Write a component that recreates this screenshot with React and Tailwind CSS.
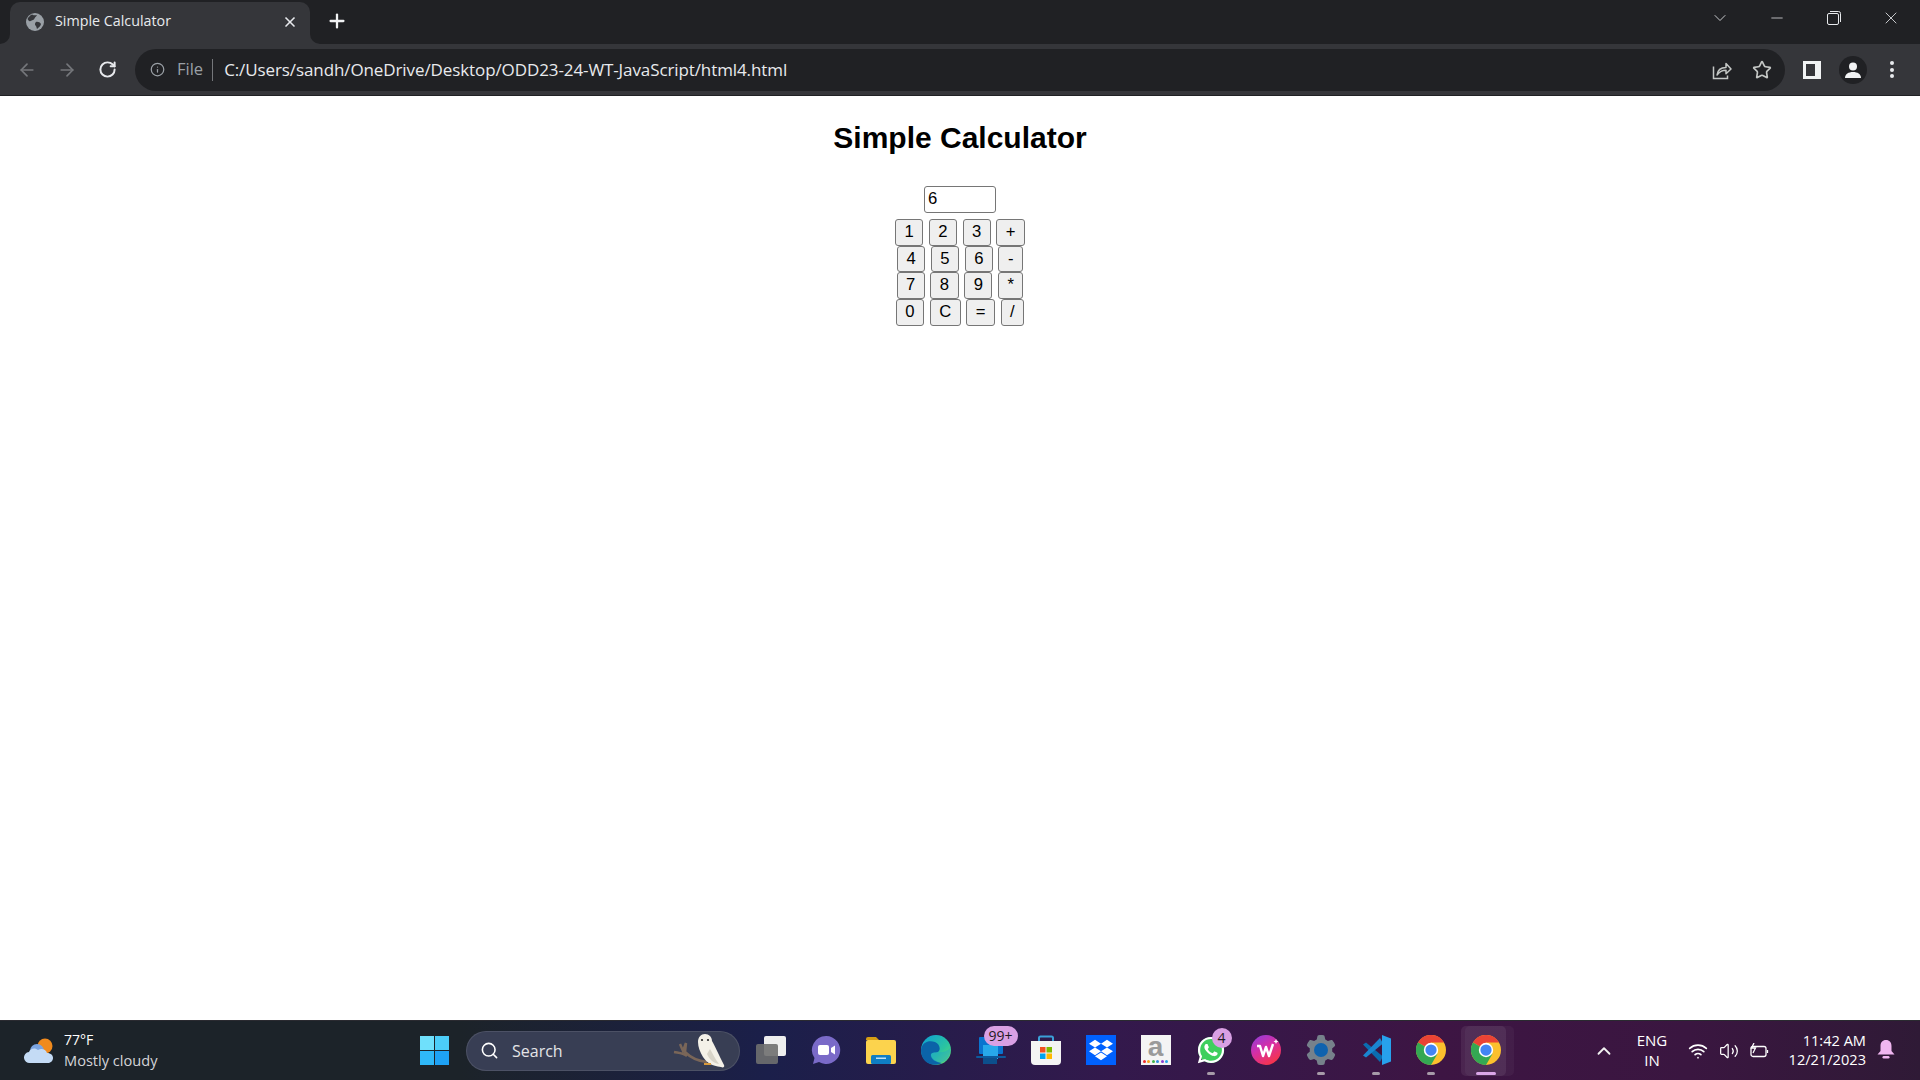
import { ArrowLeft, ArrowRight, RotateCw, Info, Star, Search, ChevronUp, ChevronDown, X, Plus, Minus, Wifi, Volume2 } from "lucide-react";
import { FaWhatsapp, FaDropbox } from "react-icons/fa";
import { FaGear } from "react-icons/fa6";

const uiFont = "font-['Open_Sans',sans-serif]";

const calcRows = [
  ["1", "2", "3", "+"],
  ["4", "5", "6", "-"],
  ["7", "8", "9", "*"],
  ["0", "C", "=", "/"],
];

function Favicon() {
  return (
    <svg width="18" height="18" viewBox="0 0 18 18">
      <circle cx="9" cy="9" r="9" fill="#9aa0a6" />
      <path d="M6 1.500c2 1 3.500 1 5 .5-.5 1.500-2 2-2.500 3.500S6 7 4.500 8 2.500 7 1.500 6C2.500 4 4 2.500 6 1.500zM10 9c2-.5 4 .5 5 2-.5 2-2 3.500-4 5-.5-1.500-.5-2.500-1.500-3.500S9 10 10 9z" fill="#35363a" />
    </svg>
  );
}

function ShareIcon() {
  return (
    <svg width="20" height="20" viewBox="0 0 20 20" fill="none" stroke="#c4c7c5" strokeWidth="1.500">
      <path d="M1.500 6.500v12h14v-3" />
      <path d="M5 15c.5-4 3-7.500 9-7.500V3.500l5 5.500-5 4.800v-3.600c-3.500 0-6.500 1.300-9 4.800z" strokeLinejoin="round" />
    </svg>
  );
}

function SidePanelIcon() {
  return (
    <div className="flex h-[18px] w-[18px] justify-start bg-[#f1f3f4] py-[3px] pl-[3px]">
      <div className="h-full w-[9px] bg-[#35363a]" />
    </div>
  );
}

function ProfileIcon() {
  return (
    <div className="flex h-7 w-7 items-center justify-center rounded-full bg-[#202124]">
      <svg width="18" height="18" viewBox="0 0 18 18" fill="#f1f3f4">
        <circle cx="9" cy="5.500" r="4" />
        <path d="M1 17c0-4 3.500-6 8-6s8 2 8 6z" />
      </svg>
    </div>
  );
}

function WeatherIcon() {
  return (
    <svg width="32" height="28" viewBox="0 0 32 28">
      <circle cx="21" cy="9" r="7.500" fill="#f08a1d" />
      <ellipse cx="13" cy="14" rx="7" ry="7" fill="#7ba4e0" />
      <path d="M6 26a5.500 5.500 0 0 1-1-11c1-3.500 6-5 9-2 3-2 8-1 9 3 4 0 6 2.500 6 5s-2 5-5 5z" fill="#c4dbf5" />
    </svg>
  );
}

function WindowsLogo() {
  return (
    <div className="grid h-[29px] w-[29px] grid-cols-2 gap-[1px]">
      <div className="bg-[#6fe0fb]" />
      <div className="bg-[#4ccdf8]" />
      <div className="bg-[#2fb8f8]" />
      <div className="bg-[#1ea2f5]" />
    </div>
  );
}

function Owl() {
  return (
    <svg width="58" height="36" viewBox="0 0 58 36">
      <path d="M1 19c5 1 9 1 13 4M7 11l3 7 3-8-1 9c5 5 11 9 22 10" fill="none" stroke="#7a6658" strokeWidth="2.500" />
      <path d="M25 9c0-5 3-8 7-8s7 3 7 7c3 5 6 12 12 24 1 2-1 3-3 2-9-1-14-4-18-10-3-5-5-10-5-15z" fill="#f4f1e8" />
      <path d="M37 16c3 5 5 10 9 15-6-1-10-5-12-10z" fill="#d8d4c8" />
      <circle cx="29" cy="7" r="1.100" fill="#2a2a2a" />
      <circle cx="35" cy="7" r="1.100" fill="#2a2a2a" />
      <path d="M31 31h7" stroke="#d89a3c" strokeWidth="2" />
    </svg>
  );
}

function TaskViewIcon() {
  return (
    <div className="relative h-[28px] w-[30px]">
      <div className="absolute right-0 top-0 h-5 w-[22px] rounded-[2px] bg-[#eeeeee]" />
      <div className="absolute bottom-0 left-0 h-5 w-[22px] rounded-[2px] bg-[#6f6f6f]/90" />
    </div>
  );
}

function ChatIcon() {
  return (
    <svg width="30" height="30" viewBox="0 0 30 30">
      <path d="M15 1a14 14 0 1 1-7 26l-6 2 1.500-6A14 14 0 0 1 15 1z" fill="#7a6ac8" />
      <rect x="7" y="10" width="11" height="10" rx="2" fill="#fff" />
      <path d="M20 13l4-2.500v9L20 17z" fill="#fff" />
    </svg>
  );
}

function ExplorerIcon() {
  return (
    <svg width="30" height="28" viewBox="0 0 30 28">
      <path d="M0 3a2 2 0 0 1 2-2h8l3 3h-13z" fill="#d69e14" />
      <rect x="0" y="4" width="30" height="24" rx="2" fill="#fcd34d" />
      <rect x="5" y="19" width="20" height="9" rx="1.500" fill="#0f7ec4" />
      <rect x="10" y="21.500" width="10" height="1.500" fill="#bfe2f7" />
    </svg>
  );
}

function EdgeIcon() {
  return (
    <svg width="30" height="30" viewBox="0 0 30 30">
      <defs>
        <linearGradient id="edgeTop" x1="0" y1="0" x2="1" y2="1">
          <stop offset="0" stopColor="#0c9fd8" />
          <stop offset="0.6" stopColor="#2bc4a0" />
          <stop offset="1" stopColor="#6de06a" />
        </linearGradient>
      </defs>
      <circle cx="15" cy="15" r="15" fill="url(#edgeTop)" />
      <path d="M0 15C1 7 8 5 14 7c5 2 6 8 3 10-3 1-7 0-7 3 0 4 5 7 11 8-6 3-13 2-17-2-3-3-4-7-4-11z" fill="#0b63a8" />
      <path d="M17 17c5 1 10-1 12-4 1 5-1 10-5 13-4 2-9 2-12-1-2-2-3-5-2-6 2-2 5-2 7-2z" fill="#1c9ad8" opacity="0.35" />
    </svg>
  );
}

function OutlookIcon() {
  return (
    <svg width="30" height="30" viewBox="0 0 30 30">
      <rect x="3" y="2" width="24" height="17" rx="1" fill="#0a74cf" />
      <rect x="7" y="10" width="15" height="14" fill="#28a8ea" />
      <rect x="0" y="21" width="30" height="2" rx="1" fill="#0c5a9e" />
      <rect x="7" y="23" width="14" height="6" fill="#0c4f8c" />
    </svg>
  );
}

function StoreIcon() {
  return (
    <svg width="30" height="30" viewBox="0 0 30 30">
      <path d="M8 6V3a1.500 1.500 0 0 1 1.500-1.500h11A1.500 1.500 0 0 1 22 3v3" fill="none" stroke="#3aa0d8" strokeWidth="2" />
      <path d="M0 6h30v20a4 4 0 0 1-4 4H4a4 4 0 0 1-4-4z" fill="#f4f4f4" />
      <rect x="9" y="12" width="5.500" height="5.500" fill="#f25022" />
      <rect x="15.500" y="12" width="5.500" height="5.500" fill="#7fba00" />
      <rect x="9" y="18.500" width="5.500" height="5.500" fill="#00a4ef" />
      <rect x="15.500" y="18.500" width="5.500" height="5.500" fill="#ffb900" />
    </svg>
  );
}

function DropboxIcon() {
  return (
    <div className="flex h-[30px] w-[30px] items-center justify-center bg-[#0061fe]">
      <FaDropbox size={24} color="#fff" />
    </div>
  );
}

function AmazonIcon() {
  const dots = ["bg-[#ef2b2b]", "bg-[#f7a11a]", "bg-[#3fb54a]", "bg-[#2f8fe0]", "bg-[#8b3fd1]", "bg-[#2aa4e8]"];
  return (
    <div className="flex h-[30px] w-[30px] flex-col items-center bg-[#f4f4f4]">
      <span className="font-['Liberation_Sans',sans-serif] text-[28px] font-bold leading-[24px] text-[#9a9a9a]">a</span>
      <div className="mt-[1px] flex gap-[1.500px]">
        {dots.map((c) => (
          <span key={c} className={"h-[3px] w-[3px] rounded-full " + c} />
        ))}
      </div>
    </div>
  );
}

function WhatsappIcon() {
  return (
    <div className="relative flex h-[30px] w-[30px] items-center justify-center">
      <div className="absolute h-[26px] w-[26px] rounded-full bg-[#3ecf5e]" />
      <FaWhatsapp size={30} color="#fff" className="relative" />
    </div>
  );
}

function WpsIcon() {
  return (
    <svg width="30" height="30" viewBox="0 0 30 30">
      <defs>
        <linearGradient id="wpsBg" x1="0" y1="0" x2="0.6" y2="1">
          <stop offset="0" stopColor="#8a3fe0" />
          <stop offset="0.5" stopColor="#d42fa8" />
          <stop offset="1" stopColor="#f5344d" />
        </linearGradient>
      </defs>
      <circle cx="15" cy="15" r="15" fill="url(#wpsBg)" />
      <path d="M6 11h3l3 10 3-9 3 9 4-12" fill="none" stroke="#fff" strokeWidth="2.400" strokeLinejoin="round" />
      <path d="M25 4l.8 1.700 1.700.8-1.700.8-.8 1.700-.8-1.700-1.700-.8 1.700-.8z" fill="#fff" />
    </svg>
  );
}

function SettingsIcon() {
  return (
    <div className="relative flex h-[30px] w-[30px] items-center justify-center">
      <FaGear size={30} color="#76818b" />
      <div className="absolute h-[14px] w-[14px] rounded-full bg-[#0f62ae]" />
    </div>
  );
}

function VscodeIcon() {
  return (
    <svg width="30" height="30" viewBox="0 0 30 30">
      <path d="M2 10.500l3-2 17 14-3 5.500z" fill="#0a6cb0" transform="translate(0 -1)" />
      <path d="M2 19.500l3 2 17-14-3-5.500z" fill="#1a86d0" transform="translate(0 1)" />
      <path d="M21 0l9 3.500v23L21 30z" fill="#27a1ec" />
    </svg>
  );
}

function ChromeIcon() {
  return (
    <svg width="30" height="30" viewBox="0 0 48 48">
      <circle cx="24" cy="24" r="24" fill="#fbc02d" />
      <path d="M24 24L3.200 12A24 24 0 0 1 44.800 12H24z" fill="#ea4335" />
      <path d="M24 24L3.200 12A24 24 0 0 0 24 48l10.400-18z" fill="#34a853" />
      <circle cx="24" cy="24" r="11.500" fill="#fff" />
      <circle cx="24" cy="24" r="9" fill="#4285f4" />
    </svg>
  );
}

function TaskItem({ children, dot, active }) {
  return (
    <div className="relative flex h-[60px] w-[55px] items-center justify-center pb-[2px]">
      {active ? (
        <>
          <div className="absolute inset-y-[5px] left-[7px] right-[-1px] rounded-[5px] bg-white/[0.04]" />
          <div className="absolute inset-y-[5px] left-[3px] right-[7px] rounded-[5px] bg-white/[0.07]" />
        </>
      ) : null}
      <div className="relative">{children}</div>
      {dot ? <div className="absolute bottom-[6px] left-1/2 h-[3px] w-2 -translate-x-1/2 rounded-full bg-[#a79ba9]" /> : null}
      {active ? <div className="absolute bottom-[6px] left-1/2 h-[3px] w-5 -translate-x-1/2 rounded-full bg-[#dba6e8]" /> : null}
    </div>
  );
}

function Badge({ children, className }) {
  return (
    <span className={"absolute flex items-center justify-center bg-[#d9a0e4] text-[#1f1a22] " + uiFont + " " + className}>
      {children}
    </span>
  );
}

function Calculator() {
  return (
    <main className="flex-1 bg-white font-['Liberation_Sans',sans-serif] text-black">
      <h2 className="pt-[25px] text-center text-[30px] font-bold leading-[34px]">Simple Calculator</h2>
      <div className="mt-[31px] flex justify-center">
        <input
          readOnly
          value="6"
          className="h-[27px] w-[72px] rounded-[3px] border border-[#767676] px-[3px] pb-[1px] text-[16.670px] outline-none"
        />
      </div>
      <div className="mt-[6px]">
        {calcRows.map((row) => (
          <div key={row[0]} className="flex h-[26.670px] justify-center gap-[5.560px]">
            {row.map((key) => (
              <button
                key={key}
                type="button"
                className="h-[26.670px] rounded-[3px] border border-[#767676] bg-[#efefef] px-[8.500px] text-[16.670px] leading-none text-black"
              >
                {key}
              </button>
            ))}
          </div>
        ))}
      </div>
    </main>
  );
}

export default function App() {
  return (
    <div className="flex h-screen w-full flex-col overflow-hidden">
      <header className={"bg-[#202124] " + uiFont}>
        <div className="flex h-[44px] items-end pl-[10px]">
          <div className="relative flex h-[42px] w-[300px] items-center rounded-t-[10px] bg-[#35363a] pb-[3px] pl-[16px] pr-[12px]">
            <svg width="10" height="10" viewBox="0 0 10 10" fill="#35363a" className="absolute bottom-0 left-[-10px]">
              <path d="M10 0v10H0a10 10 0 0 0 10-10z" />
            </svg>
            <svg width="10" height="10" viewBox="0 0 10 10" fill="#35363a" className="absolute bottom-0 right-[-10px]">
              <path d="M0 0v10h10A10 10 0 0 1 0 0z" />
            </svg>
            <Favicon />
            <span className="ml-[11px] text-[14.300px] leading-none text-[#e8eaed]">Simple Calculator</span>
            <X size={16} strokeWidth={2.500} className="ml-auto text-[#e8eaed]" />
          </div>
          <Plus size={22} strokeWidth={2.500} className="mb-[12px] ml-[16px] text-[#f1f3f4]" />
          <div className="ml-auto mb-[16px] flex items-center text-[#e8eaed]">
            <div className="flex w-[57px] justify-center">
              <ChevronDown size={20} strokeWidth={1} />
            </div>
            <div className="flex w-[57px] justify-center">
              <Minus size={18} strokeWidth={1} />
            </div>
            <div className="flex w-[57px] justify-center">
              <svg width="14" height="14" viewBox="0 0 14 14" fill="none" stroke="#e8eaed">
                <rect x="0.500" y="2.500" width="11" height="11" rx="1.500" />
                <path d="M3 .5h8.500a2 2 0 0 1 2 2V11" />
              </svg>
            </div>
            <div className="flex w-[58px] justify-center">
              <X size={20} strokeWidth={1} />
            </div>
          </div>
        </div>
        <div className="flex h-[52px] items-center border-b border-[#202124] bg-[#35363a]">
          <div className="flex w-[135px] items-center pl-[17px]">
            <ArrowLeft size={20} className="text-[#75777b]" />
            <ArrowRight size={20} className="ml-[20px] text-[#75777b]" />
            <RotateCw size={19} strokeWidth={2.500} className="ml-[21px] text-[#e8eaed]" />
          </div>
          <div className="flex h-[42px] w-[1650px] items-center rounded-full bg-[#202124] pl-[15px] pr-[13px]">
            <Info size={15} className="text-[#9aa0a6]" />
            <span className="ml-[12px] text-[16.500px] leading-none text-[#9aa0a6]">File</span>
            <div className="ml-[9px] h-[22px] w-px bg-[#75777b]" />
            <span className="ml-[11px] text-[17px] leading-none tracking-[-0.100px] text-[#e8eaed]">
              C:/Users/sandh/OneDrive/Desktop/ODD23-24-WT-JavaScript/html4.html
            </span>
            <div className="ml-auto flex items-center gap-[20px]">
              <ShareIcon />
              <Star size={20} strokeWidth={2} className="text-[#c4c7c5]" />
            </div>
          </div>
          <div className="ml-[18px] flex items-center">
            <SidePanelIcon />
            <div className="ml-[18px]">
              <ProfileIcon />
            </div>
            <div className="ml-[23px] flex flex-col gap-[2.500px]">
              <span className="h-[4px] w-[4px] rounded-full bg-[#e8eaed]" />
              <span className="h-[4px] w-[4px] rounded-full bg-[#e8eaed]" />
              <span className="h-[4px] w-[4px] rounded-full bg-[#e8eaed]" />
            </div>
          </div>
        </div>
      </header>

      <Calculator />

      <footer
        className={
          "flex h-[60px] items-center border-t border-[#2a2a30] bg-[linear-gradient(90deg,#1c2329_0%,#1c2329_24%,#1b1f4a_40%,#33194c_58%,#3d1543_75%,#3a1640_88%,#2f1a36_100%)] text-white " +
          uiFont
        }
      >
        <div className="flex w-[420px] items-center pl-[24px]">
          <WeatherIcon />
          <div className="ml-[8px] flex flex-col pb-[2px]">
            <span className="text-[14px] leading-[20px]">77°F</span>
            <span className="text-[14.600px] leading-[20px] text-[#d4d4d8]">Mostly cloudy</span>
          </div>
        </div>
        <WindowsLogo />
        <div className="relative ml-[17px] flex h-10 w-[274px] items-center rounded-full border border-white/10 bg-[#383e54] pl-[13px]">
          <Search size={19} strokeWidth={2} className="text-white" />
          <span className="ml-[13px] text-[16px] text-[#e4e4e7]">Search</span>
          <div className="absolute bottom-[1px] right-[8px]">
            <Owl />
          </div>
        </div>
        <div className="ml-[3px] flex items-center">
          <TaskItem><TaskViewIcon /></TaskItem>
          <TaskItem><ChatIcon /></TaskItem>
          <TaskItem><ExplorerIcon /></TaskItem>
          <TaskItem><EdgeIcon /></TaskItem>
          <TaskItem>
            <OutlookIcon />
            <Badge className="right-[-12px] top-[-9px] h-5 w-[34px] rounded-full text-[14px]">99+</Badge>
          </TaskItem>
          <TaskItem><StoreIcon /></TaskItem>
          <TaskItem><DropboxIcon /></TaskItem>
          <TaskItem><AmazonIcon /></TaskItem>
          <TaskItem dot>
            <WhatsappIcon />
            <Badge className="right-[-6px] top-[-7px] h-5 w-5 rounded-full text-[14px]">4</Badge>
          </TaskItem>
          <TaskItem><WpsIcon /></TaskItem>
          <TaskItem dot><SettingsIcon /></TaskItem>
          <TaskItem dot><VscodeIcon /></TaskItem>
          <TaskItem dot><ChromeIcon /></TaskItem>
          <TaskItem active><ChromeIcon /></TaskItem>
        </div>
        <div className="ml-auto flex items-center pr-[25px]">
          <ChevronUp size={22} strokeWidth={2} className="text-[#f1f1f1]" />
          <div className="ml-[17px] flex w-[40px] flex-col items-center pb-[2px] text-[15px] leading-[20px]">
            <span>ENG</span>
            <span>IN</span>
          </div>
          <Wifi size={20} className="ml-[16px]" />
          <Volume2 size={20} strokeWidth={1.500} className="ml-[11px]" />
          <svg width="20" height="16" viewBox="0 0 20 16" fill="none" stroke="#fff" strokeWidth="1.300" className="ml-[10px]">
            <rect x="2" y="3.500" width="15" height="10" rx="2" />
            <path d="M18.500 7v3" />
            <path d="M5 0L2.500 5h4L4 10" />
          </svg>
          <div className="ml-[17px] flex w-[80px] flex-col items-end pb-[2px] text-[14.600px] leading-[19px]">
            <span>11:42 AM</span>
            <span>12/21/2023</span>
          </div>
          <svg width="18" height="20" viewBox="0 0 18 20" fill="#f0b6f0" className="ml-[11px] mb-[2px]">
            <path d="M9 0c3.500 0 5.500 2.500 5.500 6v5l3 3.500H.5l3-3.500V6C3.500 2.500 5.500 0 9 0z" />
            <rect x="5.500" y="16" width="7" height="2.500" rx="1.200" />
          </svg>
        </div>
      </footer>
    </div>
  );
}
